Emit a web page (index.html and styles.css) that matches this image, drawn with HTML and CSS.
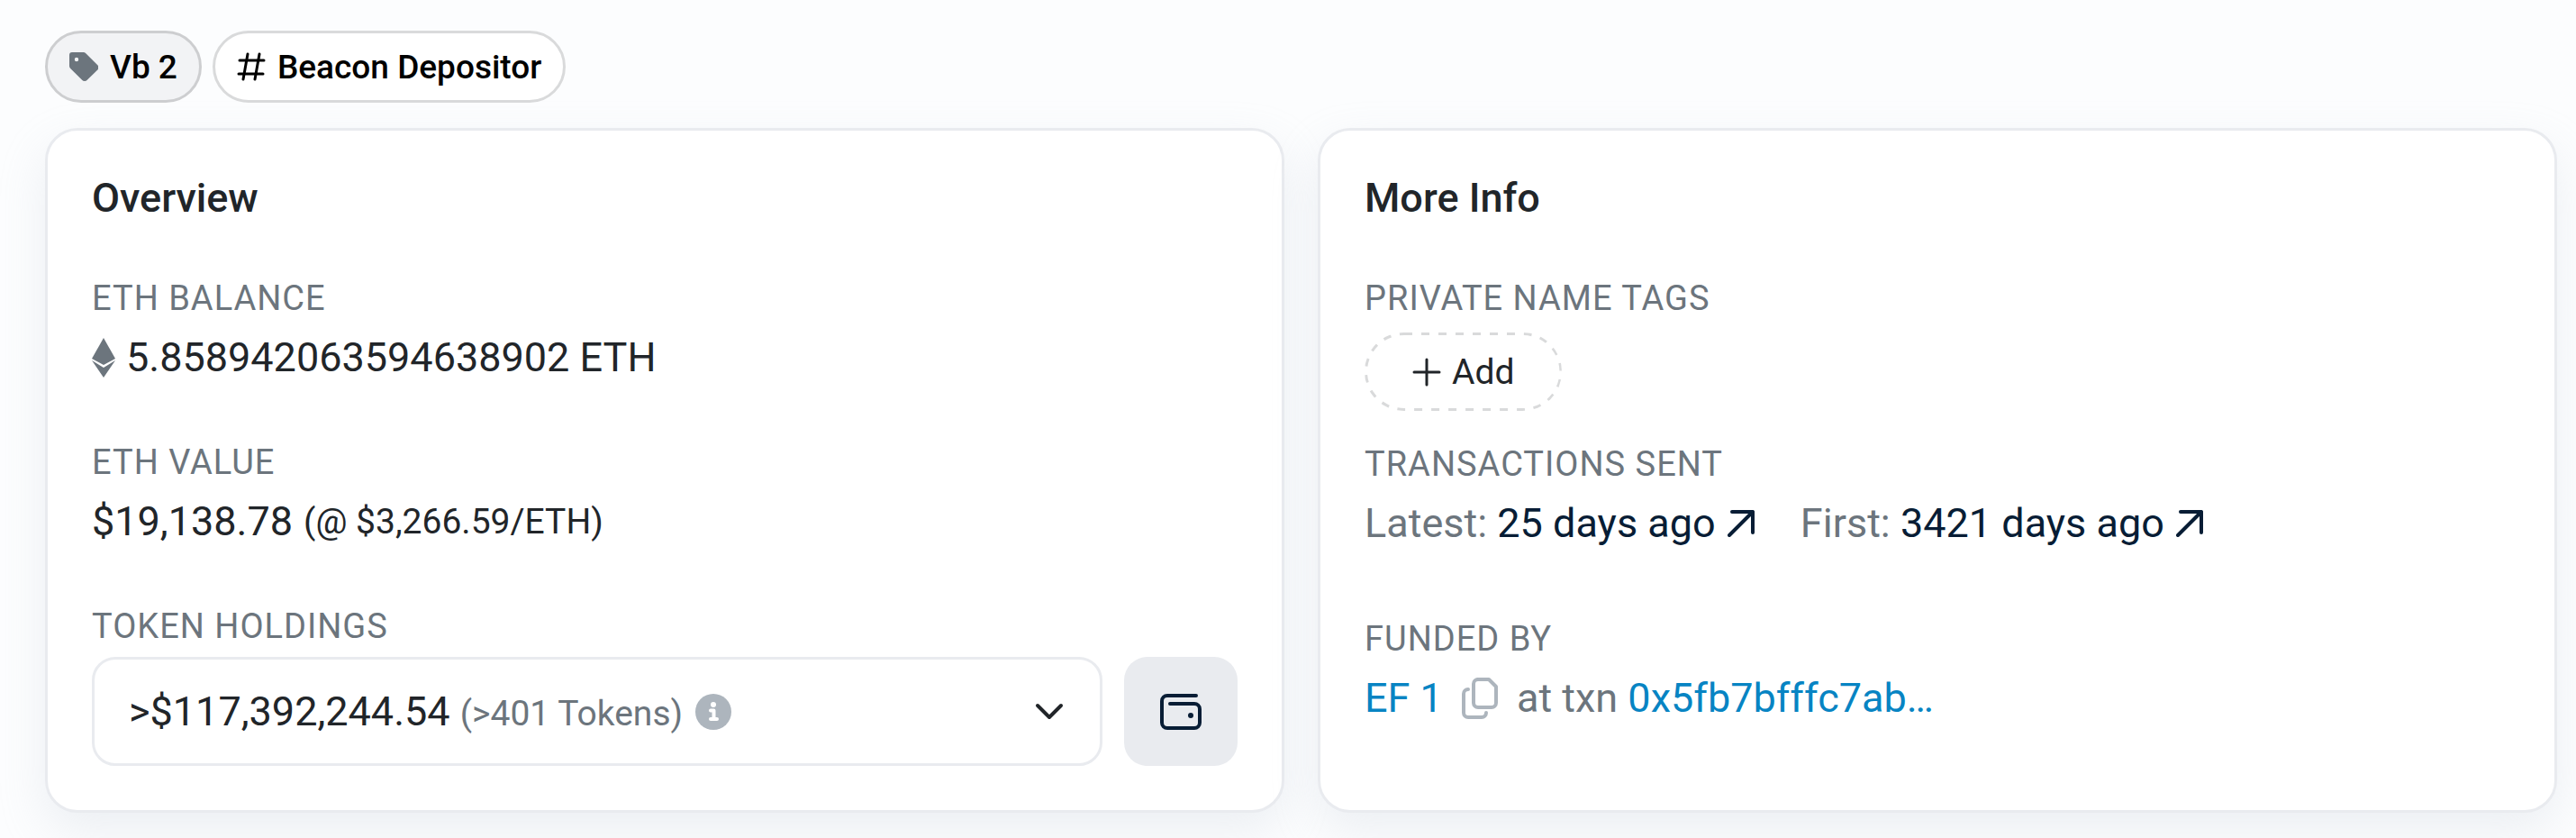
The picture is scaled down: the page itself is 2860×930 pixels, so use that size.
FILE: index.html
```html
<!DOCTYPE html>
<html lang="en">
<head>
  <meta charset="UTF-8" />
  <meta name="viewport" content="width=device-width, initial-scale=1.0"/>
  <title>Address Overview</title>
  <link rel="stylesheet" href="styles.css">
</head>
<body>
  <!-- Name tags -->
  <div class="tags">
    <a href="#" class="tag tag-muted">
      <svg class="icon-sm" viewBox="0 0 32 32" aria-hidden="true">
        <path fill="#6c757d" fill-rule="evenodd" d="M0 3a3 3 0 0 1 3-3h12.500a4 4 0 0 1 2.800 1.200l12.800 12.800a4 4 0 0 1 0 5.700L19.800 30.800a4 4 0 0 1-5.700 0L1.200 18a4 4 0 0 1-1.200-2.800zM8 10.200a2.200 2.200 0 1 0 0-4.400a2.200 2.200 0 0 0 0 4.400z"/>
      </svg>
      Vb 2
    </a>
    <a href="#" class="tag">
      <svg class="icon-sm stroke thin" viewBox="0 0 32 32" aria-hidden="true">
        <path d="M3 9h27M2 24h27M12 2L7 30M25 2L20 30"/>
      </svg>
      Beacon Depositor
    </a>
  </div>

  <main class="cards">
    <section class="card">
      <h2>Overview</h2>

      <div class="item">
        <h3>ETH Balance</h3>
        <div class="value">
          <svg class="eth" viewBox="0 0 26 44" aria-hidden="true">
            <path fill="#6c757d" d="M13 0L26 23L13 30L0 23z"/>
            <path fill="#6c757d" d="M0 25L13 33L26 25L13 44z"/>
          </svg>
          5.858942063594638902 ETH
        </div>
      </div>

      <div class="item">
        <h3>ETH Value</h3>
        <div class="value">$19,138.78 <span class="small">(@ $3,266.59/ETH)</span></div>
      </div>

      <div class="item">
        <h3>Token Holdings</h3>
        <div class="holdings">
          <button type="button" class="dropdown" aria-haspopup="listbox">
            <span>&gt;$117,392,244.54 <span class="small muted">(&gt;401 Tokens)</span></span>
            <svg class="info" viewBox="0 0 40 40" aria-hidden="true">
              <circle cx="20" cy="20" r="20" fill="#adb5bd"/>
              <circle cx="20" cy="12" r="3" fill="#fff"/>
              <path fill="none" stroke="#fff" stroke-width="4" stroke-linecap="round" stroke-linejoin="round" d="M17 18.500h3.500v9M17 28h7"/>
            </svg>
            <svg class="chevron stroke" viewBox="0 0 32 20" aria-hidden="true">
              <path d="M3 3l13 13L29 3"/>
            </svg>
          </button>
          <button type="button" class="wallet" aria-label="View wallet">
            <svg class="stroke" viewBox="0 0 46 40" aria-hidden="true">
              <path d="M40 2H8a6 6 0 0 0-6 6v24a6 6 0 0 0 6 6h30a6 6 0 0 0 6-6V17a6 6 0 0 0-6-6H11"/>
              <circle cx="34" cy="24" r="3" fill="currentColor" stroke="none"/>
            </svg>
          </button>
        </div>
      </div>
    </section>

    <section class="card">
      <h2>More Info</h2>

      <div class="item item-tags">
        <h3>Private Name Tags</h3>
        <button type="button" class="add">
          <!-- dashed outline, outer half of the stroke is clipped -->
          <svg class="outline" aria-hidden="true"><rect width="100%" height="100%" rx="44"/></svg>
          <svg class="icon-sm stroke thin" viewBox="0 0 32 32" aria-hidden="true">
            <path d="M16 2v28M2 16h28"/>
          </svg>
          Add
        </button>
      </div>

      <div class="item item-txns">
        <h3>Transactions Sent</h3>
        <div class="value txns">
          <div>
            <span class="muted">Latest:</span>
            <a href="#" class="dark">25 days ago
              <svg class="arrow stroke" viewBox="0 0 30 30" aria-hidden="true"><path d="M5 2h23v23M28 2L2 28"/></svg></a>
          </div>
          <div>
            <span class="muted">First:</span>
            <a href="#" class="dark">3421 days ago
              <svg class="arrow stroke" viewBox="0 0 30 30" aria-hidden="true"><path d="M5 2h23v23M28 2L2 28"/></svg></a>
          </div>
        </div>
      </div>

      <div class="item">
        <h3>Funded By</h3>
        <div class="value funded">
          <a href="#">EF 1</a>
          <button type="button" class="copy" aria-label="Copy address">
            <svg viewBox="0 0 40 46" aria-hidden="true">
              <path fill="none" stroke="#adb5bd" stroke-width="4" stroke-linecap="round" stroke-linejoin="round" d="M17 2h13l8 8v18a5 5 0 0 1-5 5H18a5 5 0 0 1-5-5V7a5 5 0 0 1 5-5M7 13a5 5 0 0 0-5 5v21a5 5 0 0 0 5 5h15a5 5 0 0 0 5-5"/>
            </svg>
          </button>
          <span><span class="muted">at txn</span> <a href="#">0x5fb7bfffc7ab…</a></span>
        </div>
      </div>
    </section>
  </main>
</body>
</html>
```
FILE: styles.css
```css
* {
  box-sizing: border-box;
}

body {
  margin: 0;
  padding: 34px 21px 28px 50px;
  font-family: Roboto, "Liberation Sans", sans-serif;
  font-size: 45px;
  color: #212529;
  background: #fcfdfe;
}

h2, h3 {
  margin: 0;
}

h2 {
  font-size: 45px;
  font-weight: 500;
  line-height: 54px;
  margin-bottom: 56px;
}

h3 {
  font-size: 38px;
  font-weight: 400;
  line-height: 56px;
  letter-spacing: 1px;
  text-transform: uppercase;
  color: #6c757d;
}

a {
  color: #0784c3;
  text-decoration: none;
}

button {
  font: inherit;
  color: inherit;
  background: none;
  border: none;
  padding: 0;
  cursor: pointer;
}

svg {
  display: block;
  flex: none;
}

.stroke {
  fill: none;
  stroke: currentColor;
  stroke-width: 4;
  stroke-linecap: round;
  stroke-linejoin: round;
}

.thin {
  stroke-width: 3;
}

.icon-sm {
  width: 32px;
  height: 32px;
}

.small {
  font-size: 39px;
}

.muted {
  color: #6c757d;
}

/* Tags */
.tags {
  display: flex;
  gap: 12px;
  margin-bottom: 28px;
}

.tag {
  display: flex;
  align-items: center;
  gap: 13px;
  height: 80px;
  padding: 0 24px;
  border: 3px solid #d9dadb;
  border-radius: 40px;
  background: #fff;
  font-size: 37px;
  font-weight: 500;
  color: #000;
}

.tag-muted {
  background: #f2f3f5;
  border-color: #cdced0;
}

/* Cards */
.cards {
  display: grid;
  grid-template-columns: 1fr 1fr;
  gap: 37px;
}

.card {
  padding: 48px 49px;
  border: 3px solid #e9ebef;
  border-radius: 36px;
  background: #fff;
  box-shadow: 0 21px 51px rgba(189, 197, 209, 0.24);
}

.item {
  margin-bottom: 50px;
}

.item:last-child {
  margin-bottom: 0;
}

.value {
  display: flex;
  align-items: center;
  gap: 12px;
  line-height: 76px;
}

.eth {
  width: 26px;
  height: 44px;
}

.holdings {
  display: flex;
  gap: 24px;
  height: 121px;
  margin-top: 6px;
  margin-bottom: 1px;
}

.dropdown {
  display: flex;
  flex: 1;
  align-items: center;
  gap: 14px;
  padding: 0 40px 0 38px;
  border: 3px solid #e9ebef;
  border-radius: 26px;
}

.info {
  width: 40px;
  height: 40px;
}

.chevron {
  width: 32px;
  height: 20px;
  margin-left: auto;
}

.wallet {
  display: grid;
  place-items: center;
  width: 126px;
  border-radius: 26px;
  background: #e9ebef;
  color: #081d35;
}

.wallet svg {
  width: 46px;
  height: 40px;
}

/* More info */
.item-tags {
  margin-bottom: 31px;
}

.add {
  position: relative;
  display: flex;
  align-items: center;
  gap: 12px;
  height: 87px;
  margin-top: 10px;
  padding: 0 53px;
  font-size: 39px;
}

.outline {
  position: absolute;
  inset: 0;
  width: 100%;
  height: 100%;
  overflow: hidden;
  border-radius: 44px;
  fill: none;
  stroke: #d9dadb;
  stroke-width: 6;
  stroke-dasharray: 9 10;
}

.item-txns {
  margin-bottom: 62px;
}

.txns {
  gap: 51px;
}

.dark {
  color: #081d35;
}

.arrow {
  display: inline;
  width: 30px;
  height: 30px;
  margin-left: 2px;
}

.funded {
  gap: 21px;
}

.copy svg {
  width: 40px;
  height: 46px;
}
```
